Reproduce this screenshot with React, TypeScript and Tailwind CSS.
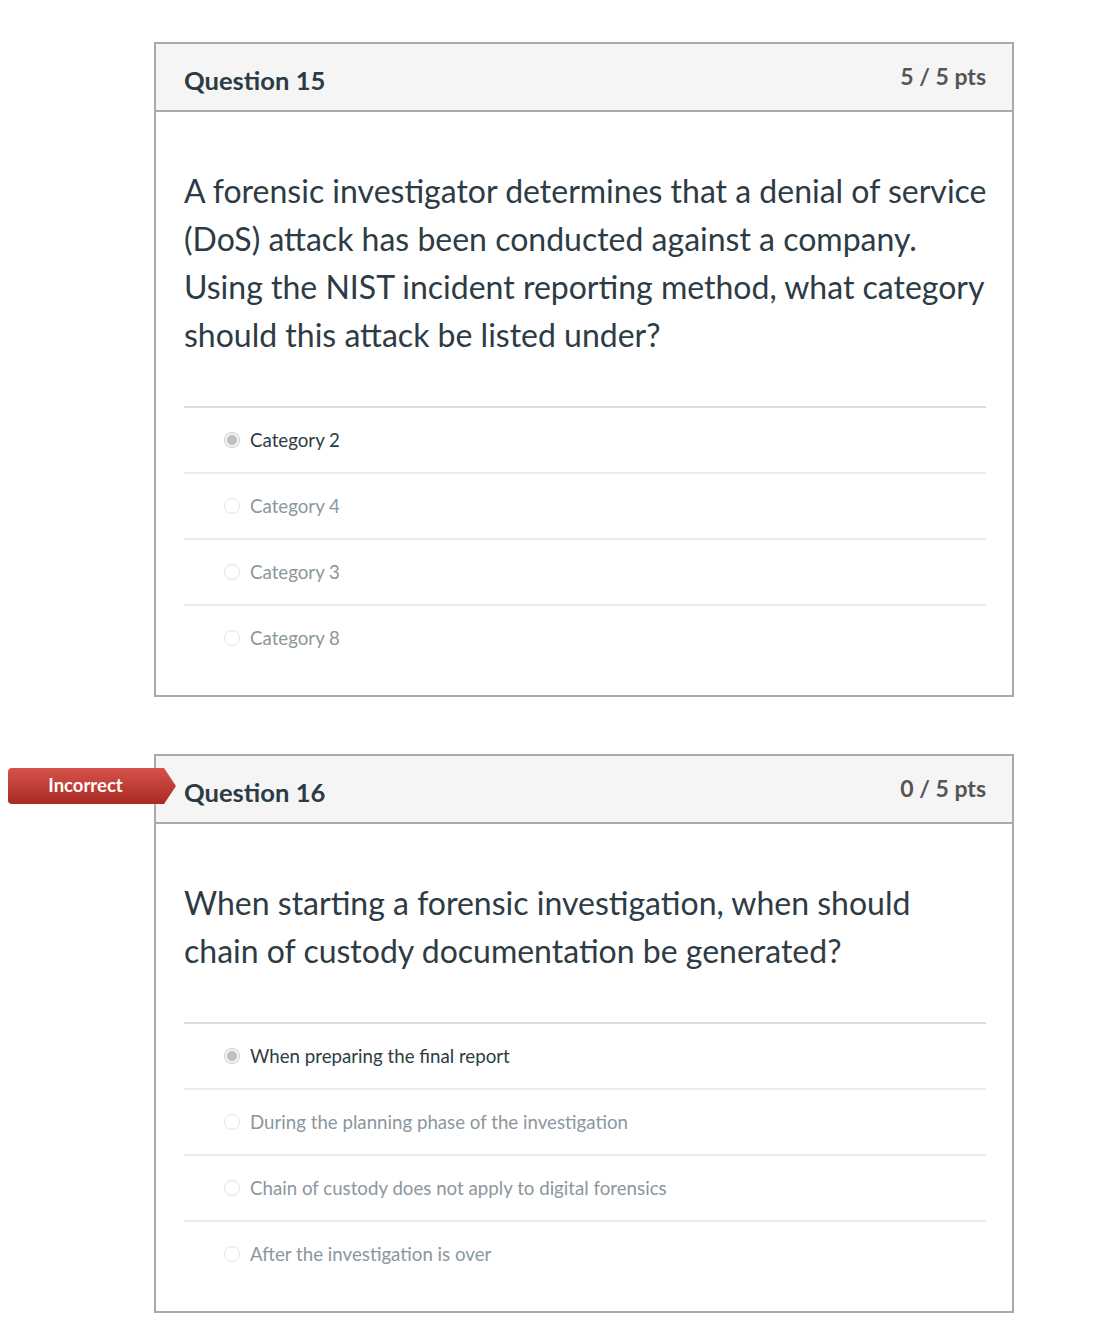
import React from "react";

type Q = {
  num: number;
  pts: string;
  text: string;
  answers: string[];
  selected: number;
  incorrect?: boolean;
};

const questions: Q[] = [
  {
    num: 15,
    pts: "5 / 5 pts",
    text: "A forensic investigator determines that a denial of service (DoS) attack has been conducted against a company. Using the NIST incident reporting method, what category should this attack be listed under?",
    answers: ["Category 2", "Category 4", "Category 3", "Category 8"],
    selected: 0,
  },
  {
    num: 16,
    pts: "0 / 5 pts",
    text: "When starting a forensic investigation, when should chain of custody documentation be generated?",
    answers: [
      "When preparing the final report",
      "During the planning phase of the investigation",
      "Chain of custody does not apply to digital forensics",
      "After the investigation is over",
    ],
    selected: 0,
    incorrect: true,
  },
];

function Radio({ checked }: { checked: boolean }) {
  if (checked) {
    return (
      <div className="flex h-[16px] w-[16px] shrink-0 items-center justify-center rounded-full border border-[#cfcfcf] bg-[#f4f4f4]">
        <div className="h-[10px] w-[10px] rounded-full bg-[#bfbfbf]" />
      </div>
    );
  }
  return <div className="h-[16px] w-[16px] shrink-0 rounded-full border border-[#e2e2e2] bg-white" />;
}

function Question({ q }: { q: Q }) {
  return (
    <div className="relative w-[860px] border-2 border-[#aaaaaa] bg-white">
      {q.incorrect && (
        <div className="absolute left-[-148px] top-[12px] flex h-[36px] items-center">
          <div className="flex h-[36px] w-[155px] items-center justify-center rounded-l-[4px] bg-gradient-to-b from-[#d6524a] to-[#a82a22] text-[18.5px] font-bold text-white">
            Incorrect
          </div>
          <svg width="14" height="36" viewBox="0 0 14 36" className="block">
            <defs>
              <linearGradient id="bg16" x1="0" y1="0" x2="0" y2="1">
                <stop offset="0" stopColor="#d6524a" />
                <stop offset="1" stopColor="#a82a22" />
              </linearGradient>
            </defs>
            <polygon points="0,0 1,0 13,18 1,36 0,36" fill="url(#bg16)" />
          </svg>
        </div>
      )}
      <div className="flex h-[68px] items-start justify-between border-b-2 border-[#aaaaaa] bg-[#f5f5f5] pl-[28px] pr-[26px]">
        <div className="pt-[19px] text-[25.6px] font-bold leading-[34px] text-[#2d3b45]">
          Question {q.num}
        </div>
        <div className="pt-[18px] text-[23px] font-bold leading-[28px] text-[#555555]">{q.pts}</div>
      </div>
      <div className="pl-[28px] pr-[26px] pt-[55px] pb-[25px]">
        <div className="mr-[-6px] text-[32px] leading-[48px] text-[#2d3b45]">{q.text}</div>
        <div className="mt-[47px]">
          {q.answers.map((a, i) => (
            <div
              key={i}
              className={
                "flex h-[66px] items-center pl-[40px] " +
                (i === 0 ? "border-t-2 border-[#dcdcdc]" : "border-t-2 border-[#ececec]")
              }
            >
              <Radio checked={i === q.selected} />
              <span
                className={
                  "ml-[10px] text-[18.7px] " +
                  (i === q.selected ? "text-[#2d3b45]" : "text-[#8b969e]")
                }
              >
                {a}
              </span>
            </div>
          ))}
        </div>
      </div>
    </div>
  );
}

export default function App() {
  return (
    <div
      className="min-h-[1336px] w-[1098px] bg-white pt-[42px] pb-[24px]"
      style={{ fontFamily: "Lato, 'Open Sans', sans-serif" }}
    >
      <div className="ml-[154px] flex flex-col gap-[57px]">
        {questions.map((q) => (
          <Question key={q.num} q={q} />
        ))}
      </div>
    </div>
  );
}
